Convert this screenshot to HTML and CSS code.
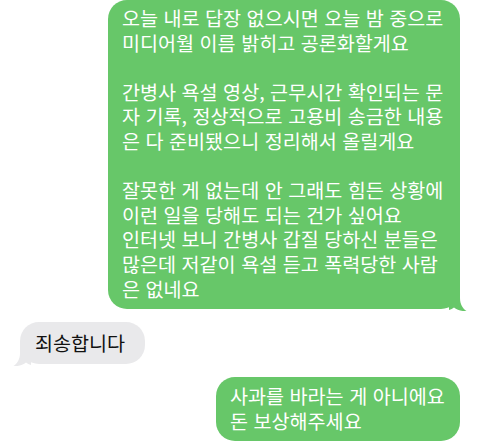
FILE: index.html
```html
<!DOCTYPE html>
<html lang="ko">
<head>
<meta charset="utf-8">
<link rel="stylesheet" href="styles.css">
</head>
<body>
<div class="thread">
  <div class="row row-out">
    <div class="bubble out big">
      <p class="text">오늘 내로 답장 없으시면 오늘 밤 중으로<br>미디어월 이름 밝히고 공론화할게요<br><br>간병사 욕설 영상, 근무시간 확인되는 문<br>자 기록, 정상적으로 고용비 송금한 내용<br>은 다 준비됐으니 정리해서 올릴게요<br><br>잘못한 게 없는데 안 그래도 힘든 상황에<br>이런 일을 당해도 되는 건가 싶어요<br>인터넷 보니 간병사 갑질 당하신 분들은<br>많은데 저같이 욕설 듣고 폭력당한 사람<br>은 없네요</p>
      <svg class="tail tail-out" width="20" height="22" viewBox="0 0 20 22"><path d="M2 21 L2 0 L13 0 L13 9 C13 15 15.5 19.5 19.5 22 C14.5 22.5 10 21 7 18.5 C5.5 19.8 4 20.5 2 21 Z"/></svg>
    </div>
  </div>
  <div class="row row-in">
    <div class="bubble in small">
      <p class="text">죄송합니다</p>
      <svg class="tail tail-in" width="20" height="22" viewBox="0 0 20 22"><path d="M18 21 L18 0 L7 0 L7 9 C7 15 4.5 19.5 0.5 22 C5.5 22.5 10 21 13 18.5 C14.5 19.8 16 20.5 18 21 Z"/></svg>
    </div>
  </div>
  <div class="row row-out">
    <div class="bubble out last">
      <p class="text">사과를 바라는 게 아니에요<br>돈 보상해주세요</p>
    </div>
  </div>
</div>
</body>
</html>
```

FILE: styles.css
```css
html, body {
  margin: 0;
  padding: 0;
  background: #ffffff;
}

body {
  width: 480px;
  height: 444px;
  overflow: hidden;
  font-family: "Noto Sans CJK KR", "Noto Sans", sans-serif;
}

.thread {
  display: flex;
  flex-direction: column;
  gap: 13px;
}

.row {
  display: flex;
}

.row-out {
  justify-content: flex-end;
  padding-right: 20px;
}

.row-in {
  justify-content: flex-start;
  padding-left: 20px;
}

.bubble {
  position: relative;
  border-radius: 19px;
  box-sizing: border-box;
}

.bubble.out {
  background: #67c769;
  color: #ffffff;
}

.bubble.in {
  background: #e9e9eb;
  color: #111111;
}

.text {
  margin: 0;
  font-size: 19.6px;
  line-height: 24.6px;
  white-space: nowrap;
}

.big {
  width: 352px;
  height: 309px;
  padding: 6px 14px;
}

.small {
  width: 125px;
  height: 42px;
  padding: 9px 15px;
}

.last {
  width: 244px;
  height: 64px;
  padding: 7px 14px;
}

.tail {
  position: absolute;
  bottom: -2px;
}

.tail-out {
  right: -7px;
  fill: #67c769;
}

.tail-in {
  left: -7px;
  fill: #e9e9eb;
}
```
